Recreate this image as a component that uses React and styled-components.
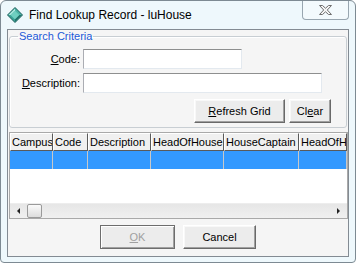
import React from 'react';
import styled, { createGlobalStyle } from 'styled-components';

const GlobalStyle = createGlobalStyle`
  html, body { margin: 0; padding: 0; background: #ffffff; }
  body { font-family: "Liberation Sans", Arial, sans-serif; font-size: 11px; color: #000; }
  * { box-sizing: border-box; }
`;

const Window = styled.div`
  width: 356px;
  height: 263px;
  display: flex;
  flex-direction: column;
  background: #eef8fc;
  border: 1px solid #7d8a93;
  border-radius: 6px 6px 4px 4px;
  padding: 0 6px 5px 6px;
  overflow: hidden;
`;

const TitleBar = styled.div`
  height: 28px;
  display: flex;
  align-items: center;
  gap: 6px;
`;

const Title = styled.span`
  font-size: 12px;
  color: #000;
  white-space: nowrap;
`;

const CloseButton = styled.div`
  margin-left: auto;
  align-self: flex-start;
  margin-top: -1px;
  width: 47px;
  height: 20px;
  border: 1px solid #98a6b0;
  border-top: none;
  border-radius: 0 0 4px 4px;
  background: #f3fafd;
  display: flex;
  align-items: center;
  justify-content: center;
`;

const Client = styled.div`
  flex: 1;
  display: flex;
  flex-direction: column;
  border: 1px solid #838b93;
  background: #f5f5f5;
`;

const Group = styled.fieldset`
  margin: 1px 1px 0 1px;
  padding: 0 15px 4px 0;
  border: 1px solid #c8ced3;
  border-radius: 3px;
  box-shadow: inset 1px 1px 0 #ffffff;
  min-width: 0;
`;

const Caption = styled.legend`
  margin-left: 8px;
  padding: 0 1px;
  font-size: 11px;
  line-height: 10px;
  color: #1c5ad8;
`;

const Fields = styled.div`
  display: grid;
  grid-template-columns: 70px 1fr;
  column-gap: 3px;
  row-gap: 4px;
  padding-top: 8px;
  align-items: center;
`;

const Label = styled.label`
  text-align: right;
  font-size: 11px;
  white-space: nowrap;
`;

const Key = styled.span`
  text-decoration: underline;
`;

const TextBox = styled.input`
  width: ${p => p.$w}px;
  height: 20px;
  margin: 0;
  padding: 0 2px;
  font-family: inherit;
  font-size: 11px;
  background: #fff;
  border: 1px solid;
  border-color: #8e8f8f #e3e9ef #e3e9ef #abadb3;
  outline: none;
`;

const ButtonRow = styled.div`
  display: flex;
  justify-content: ${p => p.$center ? 'center' : 'flex-end'};
  gap: ${p => p.$center ? 8 : 4}px;
  margin-top: ${p => p.$top}px;
`;

const Button = styled.button`
  width: ${p => p.$w}px;
  height: 24px;
  margin: 0;
  padding: 0;
  font-family: inherit;
  font-size: 11px;
  color: ${p => p.disabled ? '#a0a0a0' : '#000'};
  background: #ececec;
  border: 1px solid;
  border-color: ${p => p.$default ? '#6d6d6d' : '#ffffff #696969 #696969 #ffffff'};
  box-shadow: ${p => p.$default
    ? 'inset 1px 1px 0 #ffffff, inset -1px -1px 0 #a0a0a0'
    : 'inset -1px -1px 0 #a0a0a0, inset 1px 1px 0 #f8f8f8'};
`;

const Grid = styled.div`
  margin: 4px 0 0 1px;
  height: 87px;
  border: 1px solid #a9a9a9;
  background: #fff;
  display: flex;
  flex-direction: column;
`;

const Row = styled.div`
  display: grid;
  grid-template-columns: 43px 35px 63px 73px 75px 1fr;
  height: 18px;
  background: ${p => p.$selected ? '#3399ff' : 'transparent'};
`;

const HeadCell = styled.div`
  background: #f0f0f0;
  border: 1px solid;
  border-color: #ffffff #5a5a5a #5a5a5a #ffffff;
  padding: 0 1px;
  line-height: 16px;
  font-size: 11px;
  white-space: nowrap;
  overflow: hidden;
`;

const Cell = styled.div`
  border-right: 1px solid #c8c8c8;
`;

const Filler = styled.div`
  flex: 1;
`;

const ScrollBar = styled.div`
  height: 15px;
  display: flex;
  align-items: center;
  background: linear-gradient(#e6e6e6, #f0f0f0);
  border-top: 1px solid #ededed;
`;

const Arrow = styled.div`
  width: 17px;
  height: 100%;
  display: flex;
  align-items: center;
  justify-content: center;
  &::before {
    content: "";
    border-top: 3px solid transparent;
    border-bottom: 3px solid transparent;
    ${p => p.$right ? 'border-left: 3px solid #222;' : 'border-right: 3px solid #222;'}
  }
`;

const Thumb = styled.div`
  width: 15px;
  height: 14px;
  border: 1px solid #9a9a9a;
  border-radius: 2px;
  background: linear-gradient(#fafafa, #dcdcdc);
`;

const Track = styled.div`
  flex: 1;
`;

const Footer = styled.div`
  padding-top: 6px;
`;

function DiamondIcon() {
  return (
    <svg width="16" height="16" viewBox="0 0 16 16">
      <polygon points="8,0.5 15.5,8 8,15.5 0.5,8" fill="#3aa397" stroke="#1d5c58" strokeWidth="1" />
      <polygon points="8,3.5 12.5,8 8,12.5 3.5,8" fill="#6fcfc0" />
      <polygon points="8,1.5 8,3.5 3.5,8 1.5,8" fill="#b3ebe2" />
      <polygon points="8,14.5 8,12.5 12.5,8 14.5,8" fill="#1f6d66" />
      <polygon points="8,1.5 14.5,8 12.5,8 8,3.5" fill="#4fb5a8" />
    </svg>
  );
}

function CloseGlyph() {
  return (
    <svg width="13" height="10" viewBox="0 0 13 10">
      <polygon
        points="0.5,0.5 3.5,0.5 6.5,3.2 9.5,0.5 12.5,0.5 8.3,5 12.5,9.5 9.5,9.5 6.5,6.8 3.5,9.5 0.5,9.5 4.7,5"
        fill="#f4f4f4"
        stroke="#6e6e6e"
        strokeWidth="1"
        strokeLinejoin="round"
      />
    </svg>
  );
}

const columns = ['Campus', 'Code', 'Description', 'HeadOfHouse', 'HouseCaptain', 'HeadOfH'];

export default function App() {
  return (
    <>
      <GlobalStyle />
      <Window>
        <TitleBar>
          <DiamondIcon />
          <Title>Find Lookup Record - luHouse</Title>
          <CloseButton><CloseGlyph /></CloseButton>
        </TitleBar>
        <Client>
          <Group>
            <Caption>Search Criteria</Caption>
            <Fields>
              <Label><Key>C</Key>ode:</Label>
              <TextBox $w={159} />
              <Label><Key>D</Key>escription:</Label>
              <TextBox $w={239} />
            </Fields>
            <ButtonRow $top={6}>
              <Button $w={91}><Key>R</Key>efresh Grid</Button>
              <Button $w={42}>Cl<Key>e</Key>ar</Button>
            </ButtonRow>
          </Group>
          <Grid>
            <Row>
              {columns.map(c => <HeadCell key={c}>{c}</HeadCell>)}
            </Row>
            <Row $selected>
              {columns.map(c => <Cell key={c} />)}
            </Row>
            <Filler />
            <ScrollBar>
              <Arrow />
              <Thumb />
              <Track />
              <Arrow $right />
            </ScrollBar>
          </Grid>
          <Footer>
            <ButtonRow $center $top={0}>
              <Button $w={75} $default disabled><Key>O</Key>K</Button>
              <Button $w={73}>Cancel</Button>
            </ButtonRow>
          </Footer>
        </Client>
      </Window>
    </>
  );
}
